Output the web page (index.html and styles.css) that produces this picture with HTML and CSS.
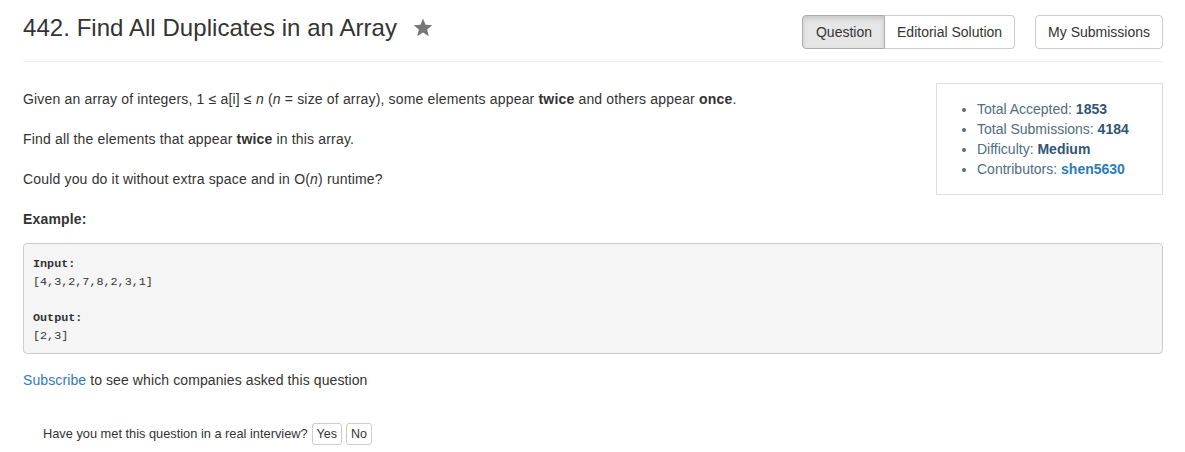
FILE: index.html
```html
<!DOCTYPE html>
<html>
<head>
<meta charset="utf-8">
<link rel="stylesheet" href="styles.css">
</head>
<body>
<div class="page">
  <div class="header">
    <h3 class="title">442. Find All Duplicates in an Array
      <svg class="star" width="20" height="19" viewBox="0 0 24 23"><path d="M12 0.5l3.1 7.6 8.2 0.6-6.3 5.3 2 8-7-4.4-7 4.4 2-8L0.7 8.7l8.2-0.6z" fill="#777"/></svg>
    </h3>
    <div class="actions">
      <div class="btn-group">
        <span class="btn active">Question</span><span class="btn">Editorial Solution</span>
      </div>
      <span class="btn">My Submissions</span>
    </div>
  </div>
  <div class="rule"></div>
  <div class="body">
    <div class="desc">
      <p>Given an array of integers, 1 ≤ a[i] ≤ <i>n</i> (<i>n</i> = size of array), some elements appear <b>twice</b> and others appear <b>once</b>.</p>
      <p>Find all the elements that appear <b>twice</b> in this array.</p>
      <p>Could you do it without extra space and in O(<i>n</i>) runtime?</p>
      <p class="example"><b>Example:</b></p>
    </div>
    <div class="stats">
      <ul>
        <li>Total Accepted: <b>1853</b></li>
        <li>Total Submissions: <b>4184</b></li>
        <li>Difficulty: <b>Medium</b></li>
        <li>Contributors: <a class="contrib">shen5630</a></li>
      </ul>
    </div>
  </div>
  <pre class="code"><b>Input:</b>
[4,3,2,7,8,2,3,1]

<b>Output:</b>
[2,3]</pre>
  <p class="subscribe"><a class="link">Subscribe</a> to see which companies asked this question</p>
  <div class="interview">Have you met this question in a real interview? <span class="small-btn">Yes</span> <span class="small-btn">No</span></div>
</div>
</body>
</html>
```

FILE: styles.css
```css
* { box-sizing: border-box; }
html, body { margin: 0; padding: 0; background: #fff; }
body {
  font-family: "Liberation Sans", Arial, Helvetica, sans-serif;
  font-size: 14px;
  color: #333;
  line-height: 20px;
}
.page { padding: 0 22px 0 23px; }
.header {
  display: flex;
  justify-content: space-between;
  align-items: flex-start;
  padding-top: 15px;
  height: 61px;
}
.title {
  margin: 0;
  font-weight: normal;
  font-size: 24px;
  line-height: 26px;
  color: #333;
  display: flex;
  align-items: center;
  gap: 16px;
  letter-spacing: 0.05px;
}
.star { margin-top: -1px; }
.actions { display: flex; gap: 20px; }
.btn-group { display: flex; }
.btn {
  display: inline-block;
  font-size: 14px;
  line-height: 20px;
  padding: 6px 12px;
  border: 1px solid #ccc;
  border-radius: 4px;
  background: #fff;
  color: #333;
  height: 34px;
}
.btn-group .btn:first-child { border-top-right-radius: 0; border-bottom-right-radius: 0; padding: 6px 12px 6px 13px; }
.btn-group .btn:last-child { border-top-left-radius: 0; border-bottom-left-radius: 0; border-left: 0; }
.btn.active {
  background: #e6e6e6;
  border-color: #adadad;
  box-shadow: inset 0 3px 5px rgba(0,0,0,.125);
}
.rule { border-top: 1px solid #eee; }
.body { display: flex; justify-content: space-between; margin-top: 21px; }
.desc { padding-top: 6px; letter-spacing: 0.17px; }
.desc p { margin: 0 0 20px 0; }
.desc .example { margin-bottom: 0; }
.stats {
  width: 227px;
  border: 1px solid #ddd;
  height: 112px;
  padding: 15px 0 0 0;
}
.stats ul { margin: 0; padding-left: 40px; color: #4f6d83; }
.stats li { line-height: 20px; }
.stats b { color: #2f5774; }
.contrib { color: #2a7cba; font-weight: bold; }
.code {
  margin: 14px 0 0 0;
  background: #f5f5f5;
  border: 1px solid #ccc;
  border-radius: 4px;
  padding: 11px 9px 9px 9px;
  font-family: "Liberation Mono", "DejaVu Sans Mono", monospace;
  font-size: 11.75px;
  line-height: 18px;
  color: #333;
  height: 111px;
}
.subscribe { margin: 16px 0 0 0; letter-spacing: 0.1px; }
.link { color: #337ab7; }
.interview {
  margin-top: 33px;
  padding-left: 20px;
  font-size: 12.8px;
  display: flex;
  align-items: center;
  gap: 4px;
}
.small-btn {
  display: inline-block;
  border: 1px solid #ccc;
  border-radius: 3px;
  padding: 0 4px;
  line-height: 20px;
  height: 22px;
  font-size: 12.5px;
  background: #fff;
}
```
